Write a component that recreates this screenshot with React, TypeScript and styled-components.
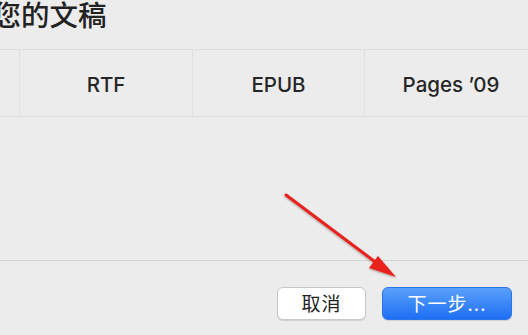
import styled, { createGlobalStyle } from "styled-components";

const GlobalStyle = createGlobalStyle`
  html, body {
    margin: 0;
    padding: 0;
    background: #ececec;
    overflow: hidden;
  }
  body {
    font-family: "Inter", "Liberation Sans", "Noto Sans CJK SC", sans-serif;
  }
`;

const Sheet = styled.div`
  position: relative;
  width: 528px;
  height: 335px;
  background: #ececec;
  display: flex;
  flex-direction: column;
  overflow: hidden;
`;

const Title = styled.h1`
  margin: 0;
  height: 49px;
  font-family: "Noto Sans CJK SC", sans-serif;
  font-weight: 500;
  font-size: 28.5px;
  line-height: 27px;
  color: #222;
  white-space: nowrap;
  text-indent: -7.5px;
`;

const FormatRow = styled.div`
  display: grid;
  grid-template-columns: 20px 173px 172px 173px;
  height: 66px;
  border-top: 1px solid #dedede;
  border-bottom: 1px solid #dedede;
`;

const FormatCell = styled.div`
  display: flex;
  align-items: center;
  justify-content: center;
  border-right: 1px solid #e0e0e0;
  font-size: 20.5px;
  font-weight: 450;
  color: #262626;
  padding-top: 3px;
`;

const Spacer = styled.div`
  height: 143px;
`;

const Divider = styled.div`
  height: 1px;
  background: #d3d3d3;
`;

const Footer = styled.div`
  display: flex;
  justify-content: flex-end;
  gap: 16px;
  padding: 26px 16px 0 0;
`;

const Button = styled.button<{ primary?: boolean }>`
  height: 33px;
  width: ${({ primary }) => (primary ? "130px" : "89px")};
  border-radius: 6px;
  font-family: "Noto Sans CJK SC", sans-serif;
  font-size: 19px;
  letter-spacing: 1px;
  display: flex;
  align-items: center;
  justify-content: center;
  padding: 0 0 2px;
  cursor: pointer;
  color: ${({ primary }) => (primary ? "#ffffff" : "#222")};
  border: 1px solid ${({ primary }) => (primary ? "#2d76ea" : "#c8c8c8")};
  background: ${({ primary }) =>
    primary ? "linear-gradient(#5aa0fb, #1d6ff4)" : "#ffffff"};
  box-shadow: 0 1px 1px rgba(0, 0, 0, 0.12);
`;

const Pointer = styled.svg`
  position: absolute;
  left: 0;
  top: 0;
  pointer-events: none;
`;

export default function App() {
  return (
    <>
      <GlobalStyle />
      <Sheet>
        <Title>您的文稿</Title>
        <FormatRow>
          <FormatCell />
          <FormatCell>RTF</FormatCell>
          <FormatCell>EPUB</FormatCell>
          <FormatCell>Pages ’09</FormatCell>
        </FormatRow>
        <Spacer />
        <Divider />
        <Footer>
          <Button>取消</Button>
          <Button primary>下一步...</Button>
        </Footer>
        <Pointer width="528" height="335" viewBox="0 0 528 335">
          <defs>
            <filter id="sh" x="-20%" y="-20%" width="140%" height="140%">
              <feDropShadow dx="0" dy="1" stdDeviation="1" floodOpacity="0.35" />
            </filter>
          </defs>
          <g filter="url(#sh)">
            <line x1="286" y1="195" x2="382" y2="267" stroke="#e8231c" strokeWidth="3" strokeLinecap="round" />
            <polygon points="396,277 369,268 378,256" fill="#e8231c" />
          </g>
        </Pointer>
      </Sheet>
    </>
  );
}
